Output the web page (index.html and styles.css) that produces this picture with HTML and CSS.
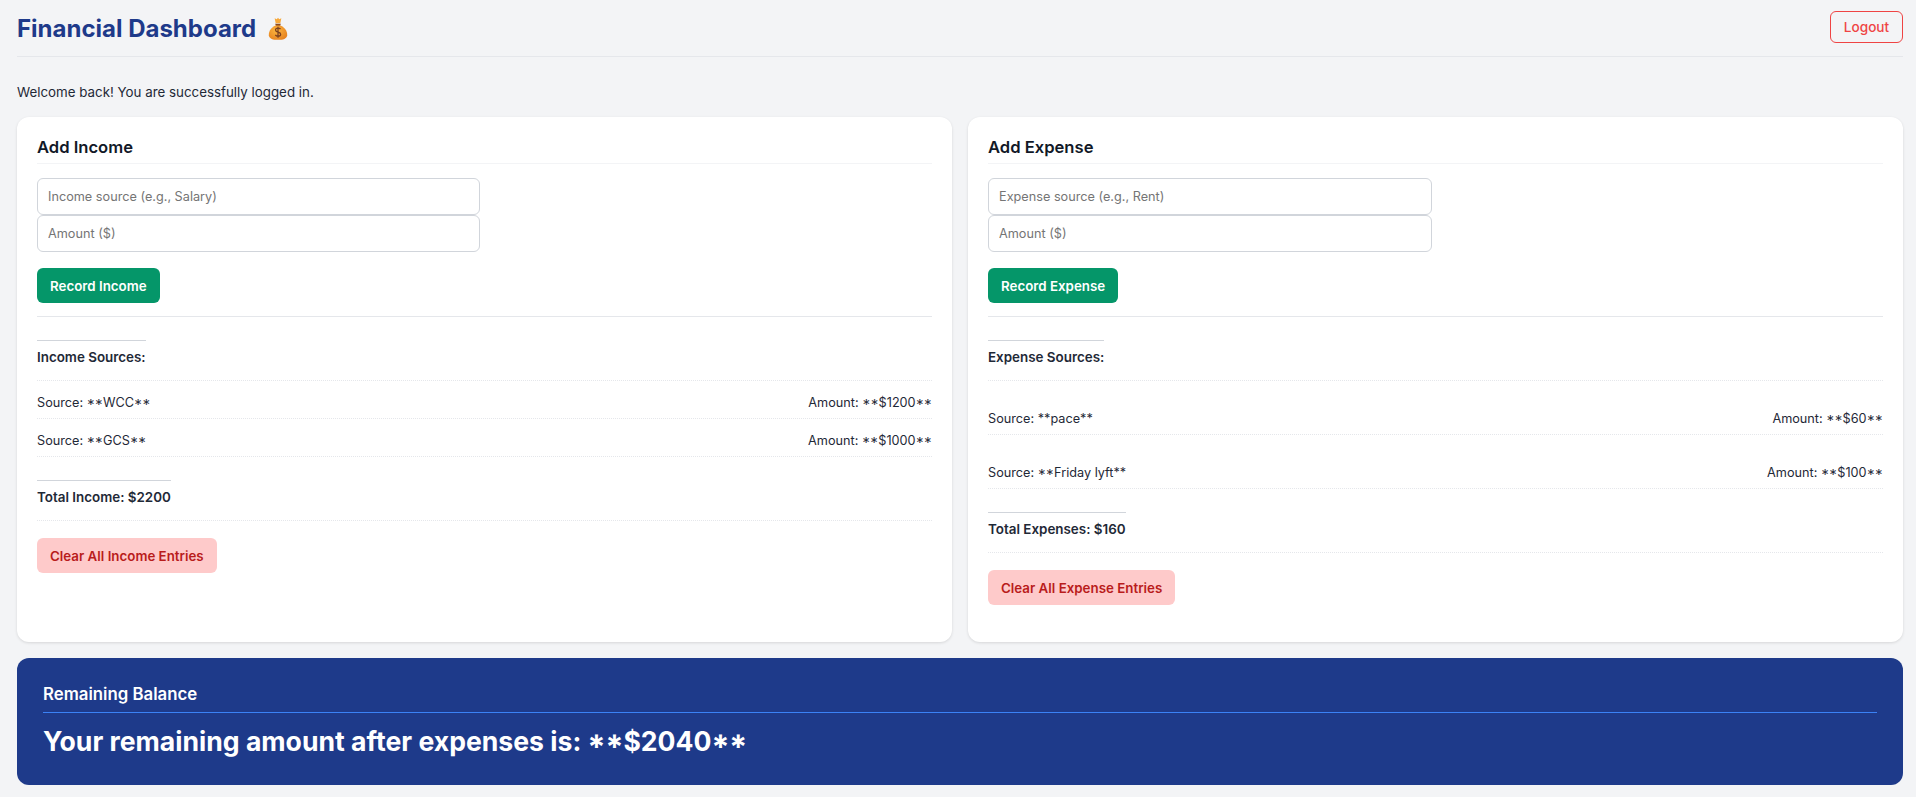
FILE: index.html
```html
<!DOCTYPE html>
<html lang="en">
<head>
<meta charset="utf-8">
<title>Financial Dashboard</title>
<link rel="stylesheet" href="styles.css">
</head>
<body>
<div class="page">
  <header class="topbar">
    <h1 class="brand">Financial Dashboard
      <svg class="bag" viewBox="0 0 24 26" preserveAspectRatio="none" aria-hidden="true">
        <defs>
          <radialGradient id="bagFill" cx="0.42" cy="0.4" r="0.7">
            <stop offset="0" stop-color="#fdb63f"/>
            <stop offset="1" stop-color="#e57f1e"/>
          </radialGradient>
        </defs>
        <path d="M12 8.500C5 10 .5 16 1 20.500 1.500 24.500 6 25.800 12 25.800S22.500 24.500 23 20.500C23.500 16 19 10 12 8.500Z" fill="url(#bagFill)"/>
        <path d="M8.500 7.500h7l-1 2.200h-5z" fill="#8a4a22"/>
        <path d="M8 1.500l2.500 1L12 .8l1.500 1.700 2.500-1-1.200 5.500H9.200z" fill="#f7a83a"/>
        <path d="M15 13.800c-.6-.9-1.700-1.300-3-1.300-1.800 0-3 .9-3 2.300 0 3.200 6.200 1.700 6.200 4.700 0 1.400-1.300 2.300-3.200 2.300-1.400 0-2.600-.5-3.200-1.500M12 11v12.500" fill="none" stroke="#7a4020" stroke-width="1.500"/>
      </svg>
    </h1>
    <button class="logout" type="button">Logout</button>
  </header>

  <p class="welcome">Welcome back! You are successfully logged in.</p>

  <main class="panels">
    <section class="card">
      <h2 class="card-title">Add Income</h2>
      <div class="fields">
        <input class="field" type="text" placeholder="Income source (e.g., Salary)">
        <input class="field" type="text" placeholder="Amount ($)">
      </div>
      <button class="btn-primary" type="button">Record Income</button>
      <div class="list-block">
        <h3 class="section-head"><span class="topline">Income Sources:</span></h3>
        <div class="row"><span>Source: <span class="cap">**</span>WCC<span class="cap">**</span></span><span>Amount: <span class="cap">**</span>$1200<span class="cap">**</span></span></div>
        <div class="row"><span>Source: <span class="cap">**</span>GCS<span class="cap">**</span></span><span>Amount: <span class="cap">**</span>$1000<span class="cap">**</span></span></div>
        <h3 class="section-head total"><span class="topline">Total Income: $2200</span></h3>
        <button class="btn-clear" type="button">Clear All Income Entries</button>
      </div>
    </section>

    <section class="card">
      <h2 class="card-title">Add Expense</h2>
      <div class="fields">
        <input class="field" type="text" placeholder="Expense source (e.g., Rent)">
        <input class="field" type="text" placeholder="Amount ($)">
      </div>
      <button class="btn-primary" type="button">Record Expense</button>
      <div class="list-block">
        <h3 class="section-head"><span class="topline">Expense Sources:</span></h3>
        <div class="row tall"><span>Source: **pace**</span><span>Amount: <span class="cap">**</span>$60<span class="cap">**</span></span></div>
        <div class="row tall"><span>Source: <span class="cap">**</span>Friday lyft**</span><span>Amount: <span class="cap">**</span>$100<span class="cap">**</span></span></div>
        <h3 class="section-head total"><span class="topline">Total Expenses: $160</span></h3>
        <button class="btn-clear" type="button">Clear All Expense Entries</button>
      </div>
    </section>
  </main>

  <section class="balance">
    <h2 class="balance-title">Remaining Balance</h2>
    <p class="balance-text">Your remaining amount after expenses is: <span class="cap">**</span>$2040<span class="cap">**</span></p>
  </section>
</div>
</body>
</html>
```

FILE: styles.css
```css
* { box-sizing: border-box; }

html, body { margin: 0; }

body {
  background: #f3f4f6;
  color: #1f2937;
  font-family: Inter, "Liberation Sans", sans-serif;
}

.page {
  padding: 0 13px 0 17px;
  display: flex;
  flex-direction: column;
}

.topbar {
  height: 57px;
  display: flex;
  align-items: center;
  justify-content: space-between;
  border-bottom: 1px solid #e5e7eb;
}

.brand {
  margin: 1px 0 0;
  display: flex;
  align-items: center;
  gap: 12px;
  font-size: 24px;
  line-height: 32px;
  font-weight: 700;
  color: #1e3a8a;
}

.bag { width: 20px; height: 23px; }

.logout {
  width: 73px;
  height: 32px;
  margin-bottom: 2px;
  padding: 0;
  background: transparent;
  border: 1px solid #ef4444;
  border-radius: 6px;
  color: #ef4444;
  font: 500 13.6px Inter, sans-serif;
}

.welcome {
  margin: 24px 0 0;
  height: 22px;
  font-size: 13.33px;
  line-height: 22px;
  color: #1f2937;
}

.panels {
  margin-top: 14px;
  display: grid;
  grid-template-columns: 1fr 1fr;
  gap: 16px;
}

.card {
  height: 525px;
  padding: 20px;
  background: #fff;
  border-radius: 12px;
  box-shadow: 0 1px 3px rgba(0, 0, 0, .12);
}

.card-title {
  margin: 0 0 14px;
  height: 27px;
  border-bottom: 1px solid #f3f4f6;
  font-size: 16.6px;
  line-height: 20px;
  font-weight: 600;
  color: #111827;
}

.fields {
  display: flex;
  flex-direction: column;
  width: 443px;
}

.card + .card .fields { width: 444px; }

.field {
  display: block;
  width: 100%;
  height: 37px;
  padding: 0 10px;
  background: #fff;
  border: 1px solid #d1d5db;
  border-radius: 6px;
  font: 400 12.7px Inter, sans-serif;
  color: #1f2937;
  outline: none;
}

.field::placeholder { color: #757575; opacity: 1; }

.btn-primary {
  display: block;
  margin-top: 16px;
  height: 35px;
  padding: 0 13px;
  background: #059669;
  border: 0;
  border-radius: 6px;
  color: #fff;
  font: 600 13.33px Inter, sans-serif;
}

.list-block {
  margin-top: 13px;
  padding-top: 23px;
  border-top: 1px solid #e5e7eb;
}

.section-head {
  margin: 0;
  height: 41px;
  border-bottom: 1px dotted #e5e7eb;
  font-size: 13.4px;
  line-height: 20px;
  font-weight: 600;
  color: #1f2937;
}

.topline {
  display: inline-block;
  padding-top: 6px;
  border-top: 1px solid #d1d5db;
}

.row {
  display: flex;
  align-items: flex-end;
  justify-content: space-between;
  height: 38px;
  padding-bottom: 5px;
  border-bottom: 1px dotted #e5e7eb;
  font-size: 12.7px;
  line-height: 20px;
  color: #1f2937;
}

.row.tall { height: 54px; }

.cap { font-feature-settings: "case"; }

.total {
  margin-top: 23px;
}

.btn-clear {
  display: block;
  margin-top: 17px;
  height: 35px;
  padding: 0 13px;
  background: #fecaca;
  border: 0;
  border-radius: 6px;
  color: #b91c1c;
  font: 600 13.33px Inter, sans-serif;
}

.balance {
  margin: 16px 0 12px;
  height: 127px;
  padding: 25px 26px 0;
  background: #1e3a8a;
  border-radius: 12px;
  color: #fff;
}

.balance-title {
  margin: 0;
  height: 30px;
  border-bottom: 1px solid #3b82f6;
  font-size: 16.8px;
  line-height: 22px;
  font-weight: 600;
}

.balance-text {
  margin: 10px 0 0;
  font-size: 26.6px;
  line-height: 36px;
  font-weight: 700;
}
```
